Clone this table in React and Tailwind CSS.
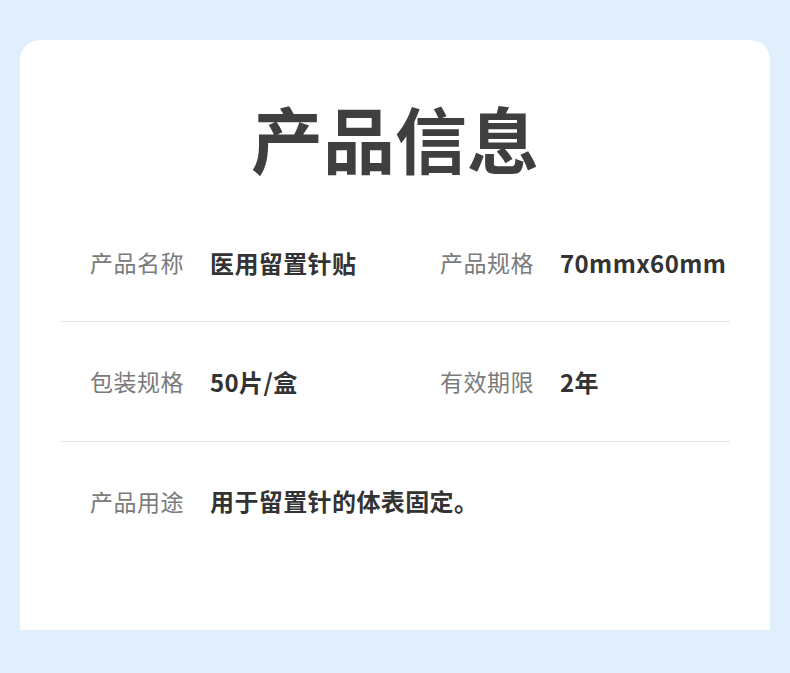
import React from "react";

const rows = [
    [
        { label: "产品名称", value: "医用留置针贴" },
        { label: "产品规格", value: "70mmx60mm" },
    ],
    [
        { label: "包装规格", value: "50片/盒" },
        { label: "有效期限", value: "2年" },
    ],
    [{ label: "产品用途", value: "用于留置针的体表固定。" }],
];

const heights = ["h-[118px]", "h-[120px]", "h-[118px]"];

const Cell = ({ label, value }) => (
    <div className="flex items-center whitespace-nowrap">
        <span className="w-[120px] shrink-0 text-[23px] text-[#7b7b7b] tracking-[0.5px]">
            {label}
        </span>
        <span className="text-[24px] font-bold text-[#333333] tracking-[0.4px]">{value}</span>
    </div>
);

export default function App() {
    return (
        <div
            className="w-[790px] h-[673px] bg-[#e1effc] pt-[40px] px-[20px] overflow-hidden"
            style={{ fontFamily: '"Noto Sans CJK SC", "Noto Sans", sans-serif' }}
        >
            <div className="bg-white rounded-t-[20px] h-[590px] px-[40px] pt-[61px]">
                {/* title */}
                <h1 className="text-center text-[72px] leading-[72px] font-bold text-[#3f3f3f]">
                    产品信息
                </h1>

                {/* spec rows */}
                <div className="mt-[31px]">
                    {rows.map((row, i) => (
                        <div
                            key={i}
                            className={`grid grid-cols-[350px_1fr] items-center px-[30px] ${heights[i]} ${
                                i < rows.length - 1 ? "border-b border-[#e6e6e6]" : ""
                            }`}
                        >
                            {row.map((c) => (
                                <Cell key={c.label} {...c} />
                            ))}
                        </div>
                    ))}
                </div>
            </div>
        </div>
    );
}
